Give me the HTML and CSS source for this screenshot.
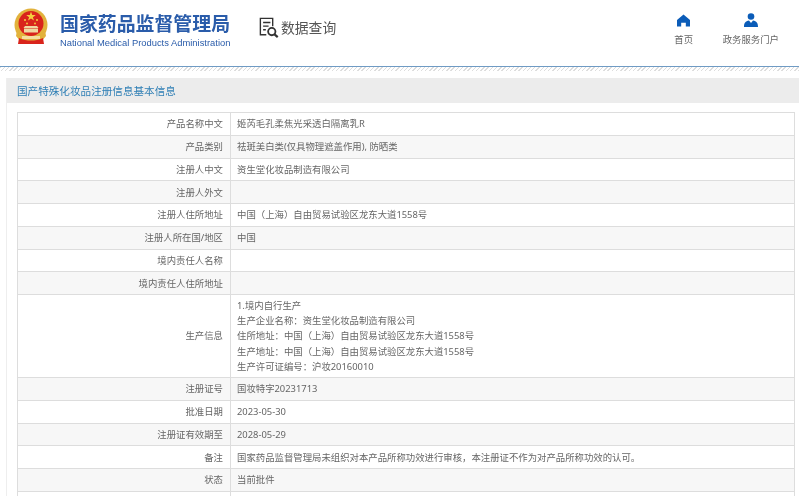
FILE: index.html
```html
<!DOCTYPE html>
<html lang="zh">
<head>
<meta charset="utf-8">
<title>国家药品监督管理局</title>
<link rel="stylesheet" href="styles.css">
</head>
<body>
<header class="top">
  <svg class="emblem" viewBox="0 0 34 38" width="34" height="38">
    <circle cx="17" cy="17" r="16.5" fill="#e2b23c"/>
    <circle cx="17" cy="15.5" r="12.5" fill="#d9241c"/>
    <polygon points="17,3.5 18.2,7 21.8,7 18.9,9.2 20,12.6 17,10.5 14,12.6 15.1,9.2 12.2,7 15.8,7" fill="#f4cf3f"/>
    <circle cx="11" cy="12" r="1" fill="#f4cf3f"/><circle cx="23" cy="12" r="1" fill="#f4cf3f"/>
    <circle cx="13" cy="15.5" r=".9" fill="#f4cf3f"/><circle cx="21" cy="15.5" r=".9" fill="#f4cf3f"/>
    <path d="M11 18h12l1.500 2h-15zM10 20.500h14v4H10z" fill="#f0d8a0"/>
    <path d="M3 22c3 5 8 7 14 7s11-2 14-7l1 6-5 6H7l-5-6z" fill="#e2b23c"/>
    <path d="M5 30c4 2 8 2.500 12 2.500s8-.5 12-2.500l1 6H4z" fill="#d9241c"/>
    <path d="M8 28h18v3H8z" fill="#f4dfa0"/>
  </svg>
  <div class="brand">
    <div class="brand-cn">国家药品监督管理局</div>
    <div class="brand-en">National Medical Products Administration</div>
  </div>
  <div class="query">
    <svg class="query-icon" viewBox="0 0 23 23" width="21" height="21" fill="none" stroke="#333" stroke-width="1.500">
      <path d="M15 10V1.500H1.500v18H8"/>
      <path d="M4.500 6h8M4.500 10h6M4.500 14h3"/>
      <circle cx="14" cy="16" r="4" stroke-width="2"/>
      <path d="M17 19l3.500 3" stroke-width="2.400"/>
    </svg>
    <span class="query-text">数据查询</span>
  </div>
  <nav class="links">
    <a class="link link-home">
      <svg class="home-icon" viewBox="0 0 14 14" width="13" height="13"><path d="M7 .5L14 6.500V13.500H9.500V9.500h-5v4H0V6.500z" fill="#0b5cb8"/></svg>
      <span>首页</span>
    </a>
    <a class="link">
      <svg viewBox="0 0 14 14" width="14" height="14"><circle cx="7" cy="3.500" r="3.300" fill="#0b5cb8"/><path d="M0 14c0-4 1.500-6 5-6.500L7 10l2-2.500c3.500.5 5 2.500 5 6.500z" fill="#0b5cb8"/></svg>
      <span>政务服务门户</span>
    </a>
  </nav>
</header>
<div class="rule"></div>
<main class="panel">
  <h1 class="panel-title">国产特殊化妆品注册信息基本信息</h1>
  <table class="info">
    <tr><th>产品名称中文</th><td>姬芮毛孔柔焦光采透白隔离乳R</td></tr>
    <tr><th>产品类别</th><td>祛斑美白类(仅具物理遮盖作用), 防晒类</td></tr>
    <tr><th>注册人中文</th><td>资生堂化妆品制造有限公司</td></tr>
    <tr><th>注册人外文</th><td></td></tr>
    <tr><th>注册人住所地址</th><td class="centered">中国（上海）自由贸易试验区龙东大道1558号</td></tr>
    <tr><th>注册人所在国/地区</th><td>中国</td></tr>
    <tr><th>境内责任人名称</th><td></td></tr>
    <tr><th>境内责任人住所地址</th><td></td></tr>
    <tr class="tall"><th>生产信息</th><td class="centered">1.境内自行生产<br>生产企业名称：资生堂化妆品制造有限公司<br>住所地址：中国（上海）自由贸易试验区龙东大道1558号<br>生产地址：中国（上海）自由贸易试验区龙东大道1558号<br>生产许可证编号：沪妆20160010</td></tr>
    <tr><th>注册证号</th><td>国妆特字20231713</td></tr>
    <tr><th>批准日期</th><td>2023-05-30</td></tr>
    <tr><th>注册证有效期至</th><td>2028-05-29</td></tr>
    <tr><th>备注</th><td>国家药品监督管理局未组织对本产品所称功效进行审核，本注册证不作为对产品所称功效的认可。</td></tr>
    <tr><th>状态</th><td>当前批件</td></tr>
    <tr><th></th><td></td></tr>
  </table>
</main>
</body>
</html>
```
FILE: styles.css
```css
* { box-sizing: border-box; }
html, body { margin: 0; height: 100%; overflow: hidden; background: #fff; }
body { font-family: "Noto Sans CJK SC", "Liberation Sans", sans-serif; color: #666; filter: blur(.3px); }

.top { height: 66px; display: flex; align-items: flex-start; padding: 8px 0 0 14px; }
.emblem { flex: none; margin-right: 12px; }
.brand { width: 172px; margin-right: 27px; padding-top: 2px; }
.brand-cn { font-size: 18.9px; line-height: 25px; font-weight: 700; color: #2a5caa; white-space: nowrap; }
.brand-en { font-family: "Liberation Sans", sans-serif; font-size: 9.4px; line-height: 13px; margin-top: 1px; color: #2a5caa; white-space: nowrap; }
.query { display: flex; align-items: center; margin-top: 8px; }
.query-icon { flex: none; margin-right: 1px; }
.query-text { font-size: 13.8px; line-height: 22px; color: #555; }
.links { margin-left: auto; display: flex; gap: 28px; padding: 5px 20px 0 0; }
.link { display: flex; flex-direction: column; align-items: center; gap: 5px; font-size: 9.4px; line-height: 14px; color: #666; }
.link-home { width: 22px; }
.home-icon { margin: 1px 0 0; }

.rule { height: 5px; border-top: 1px solid #6f9bc4; background: repeating-linear-gradient(135deg, #ddd 0 1px, #fff 1px 3px); }

.panel { margin: 7px 0 0 6px; background: #fff; border-left: 1px solid #eee; }
.panel-title { margin: 0; height: 25px; padding-left: 10px; background: #ececec; font-size: 10.6px; font-weight: 400; line-height: 25px; color: #2f7fb5; }
.info { width: 778px; margin: 9px 0 0 10px; border-collapse: collapse; table-layout: fixed; font-family: "Noto Sans", "Noto Sans CJK SC", sans-serif; font-size: 9.4px; line-height: 15.2px; }
.info tr { height: 22.75px; }
.info tr.tall { height: 83px; }
.info tr:nth-child(even) { background: #f7f7f7; }
.info th, .info td { border: 1px solid #ddd; padding: 0; vertical-align: middle; }
.info th { width: 213px; padding-right: 7px; text-align: right; font-weight: 400; }
.info td { padding-left: 6px; text-align: left; white-space: nowrap; }
.info td.centered { font-family: "Noto Sans", "Noto Sans CJK TC", sans-serif; }
```
